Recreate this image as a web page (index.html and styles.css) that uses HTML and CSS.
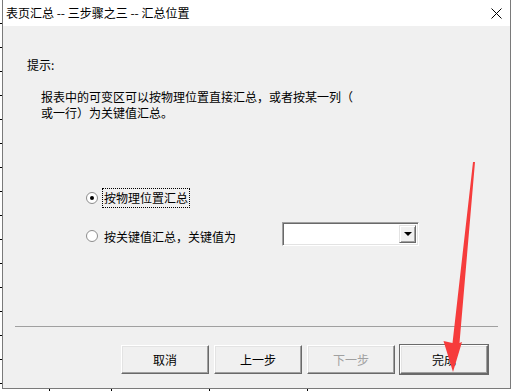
FILE: index.html
```html
<!DOCTYPE html>
<html lang="zh-CN">
<head>
  <meta charset="UTF-8">
  <title>表页汇总 -- 三步骤之三 -- 汇总位置</title>
  <link rel="stylesheet" href="styles.css">
</head>
<body>
  <div class="dialog">
    <!-- Title bar -->
    <div class="titlebar">
      <span class="title">表页汇总 -- 三步骤之三 -- 汇总位置</span>
      <svg class="close" width="11" height="11" viewBox="0 0 11 11">
        <path d="M0.5 0.5 L10.5 10.5 M10.5 0.5 L0.5 10.5" stroke="#000" stroke-width="1" fill="none"/>
      </svg>
    </div>

    <!-- Step content -->
    <div class="content">
      <div class="hint">提示:</div>
      <p class="desc">报表中的可变区可以按物理位置直接汇总，或者按某一列（<br>或一行）为关键值汇总。</p>

      <div class="options">
        <div class="option">
          <span class="radio checked"></span>
          <span class="option-text focused">按物理位置汇总</span>
        </div>
        <div class="option option-key">
          <span class="radio"></span>
          <span class="option-text">按关键值汇总，关键值为</span>
          <div class="combo">
            <span class="combo-field"></span>
            <span class="combo-btn"><span class="caret"></span></span>
          </div>
        </div>
      </div>
    </div>

    <!-- Wizard buttons -->
    <div class="separator"></div>
    <div class="buttons">
      <button class="btn">取消</button>
      <button class="btn">上一步</button>
      <button class="btn" disabled>下一步</button>
      <button class="btn default">完成</button>
    </div>
  </div>

  <!-- Red annotation arrow over the screenshot -->
  <svg class="arrow" width="514" height="391" viewBox="0 0 514 391">
    <polygon points="473,162 475,162 459.5,343 462,342 453,372 443.5,341 452.5,343" fill="#f63c3c"/>
  </svg>
</body>
</html>
```

FILE: styles.css
```css
* {
  margin: 0;
  padding: 0;
  box-sizing: border-box;
}

body {
  position: relative;
  width: 514px;
  height: 391px;
  overflow: hidden;
  font-family: "Noto Sans CJK SC", "Noto Sans", sans-serif;
  font-size: 12px;
  color: #000;
  /* spreadsheet grid peeking out behind the dialog */
  background:
    linear-gradient(#000, #000) 49px 389px / 1px 2px no-repeat,
    linear-gradient(#000, #000) 111px 389px / 1px 2px no-repeat,
    linear-gradient(#000, #000) 209px 389px / 1px 2px no-repeat,
    linear-gradient(#000, #000) 307px 389px / 1px 2px no-repeat,
    repeating-linear-gradient(to bottom, transparent 0 23px, #000 23px 24px) 0 0 / 2px 389px no-repeat,
    #fff;
}

.dialog {
  margin-left: 2px;
  width: 509px;
  height: 389px;
  background-color: #f0f0f0;
  border: 1px solid #7a7a7a;
  border-top: none;
}

.titlebar {
  height: 26px;
  background-color: #fff;
  display: flex;
  align-items: center;
  justify-content: space-between;
  padding: 0 8px 0 3px;
}

.title {
  line-height: 16px;
  white-space: pre;
}

.close {
  display: block;
  margin-top: 1px;
}

.content {
  padding-top: 31px;
}

.hint {
  padding-left: 24px;
  line-height: 16px;
}

.desc {
  margin-top: 16px;
  padding-left: 38px;
  line-height: 16px;
}

.options {
  margin-top: 67px;
  padding-left: 83px;
}

.option {
  display: flex;
  align-items: center;
  height: 20px;
}

.option-key {
  margin-top: 14px;
  height: 24px;
  align-items: flex-start;
}

.option-key .radio {
  margin-top: 8px;
}

.option-key .option-text {
  margin-top: 5px;
}

.radio {
  width: 12px;
  height: 12px;
  border-radius: 50%;
  border: 1px solid #8d8d8d;
  background-color: #fff;
  display: flex;
  align-items: center;
  justify-content: center;
  margin-right: 4px;
}

.radio.checked::after {
  content: "";
  width: 4px;
  height: 4px;
  border-radius: 50%;
  background-color: #000;
}

.option-text {
  padding: 1px;
  border: 1px solid transparent;
  line-height: 16px;
}

.option-text.focused {
  border: 1px dotted #000;
}

.combo {
  margin-left: 44px;
  width: 137px;
  height: 24px;
  display: flex;
  background-color: #fff;
  border-top: 1px solid #a0a0a0;
  border-left: 1px solid #a0a0a0;
  border-right: 1px solid #fff;
  border-bottom: 1px solid #fff;
  box-shadow: inset 1px 1px 0 #696969, inset -1px -1px 0 #e3e3e3;
  padding: 2px;
}

.combo-field {
  flex: 1;
}

.combo-btn {
  width: 17px;
  background-color: #f0f0f0;
  border-top: 1px solid #e3e3e3;
  border-left: 1px solid #e3e3e3;
  border-right: 1px solid #696969;
  border-bottom: 1px solid #696969;
  box-shadow: inset 1px 1px 0 #fff, inset -1px -1px 0 #a0a0a0;
  display: flex;
  align-items: center;
  justify-content: center;
}

.caret {
  width: 0;
  height: 0;
  border-left: 4px solid transparent;
  border-right: 4px solid transparent;
  border-top: 4px solid #000;
}

.separator {
  margin: 80px 12px 0;
  height: 1px;
  background-color: #a0a0a0;
}

.buttons {
  margin-top: 18px;
  padding-right: 22px;
  display: flex;
  justify-content: flex-end;
  gap: 5px;
}

.btn {
  width: 88px;
  height: 29px;
  font-family: inherit;
  font-size: 12px;
  color: #000;
  background-color: #f0f0f0;
  border-top: 1px solid #fff;
  border-left: 1px solid #fff;
  border-right: 1px solid #696969;
  border-bottom: 1px solid #696969;
  box-shadow: inset -1px -1px 0 #a0a0a0, inset 1px 1px 0 #e3e3e3;
}

.btn:disabled {
  color: #a0a0a0;
}

.btn.default {
  outline: 1px solid #6a6a6a;
  outline-offset: 0;
}

.arrow {
  position: absolute;
  left: 0;
  top: 0;
  pointer-events: none;
}
```
